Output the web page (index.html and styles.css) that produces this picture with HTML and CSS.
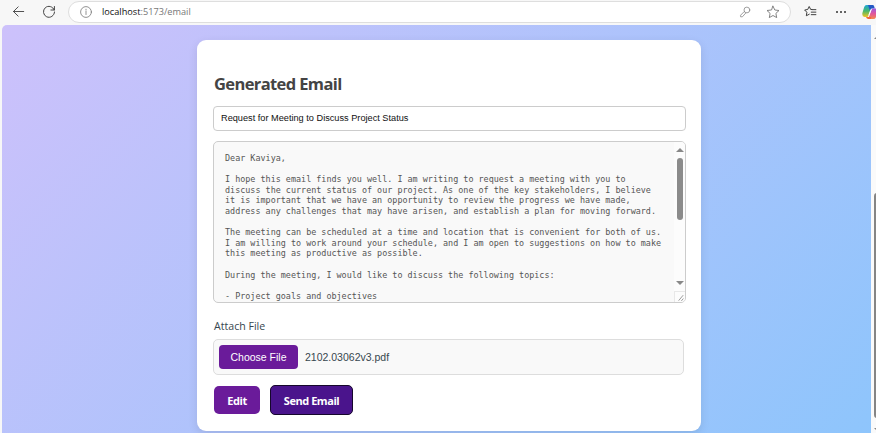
FILE: index.html
```html
<!DOCTYPE html>
<html lang="en">
<head>
<meta charset="utf-8">
<title>Generated Email</title>
<link rel="stylesheet" href="styles.css">
</head>
<body>
<header class="toolbar">
  <svg class="icon back" viewBox="0 0 14 14"><path d="M12.6 7H1.6M6.6 2L1.6 7l5 5"/></svg>
  <svg class="icon reload" viewBox="0 0 14 14"><path d="M12.2 5A5.5 5.5 0 1 0 12.5 7M12.4 1.5V5H8.9"/></svg>
  <div class="address">
    <svg class="icon info" viewBox="0 0 12 12"><circle cx="6" cy="6" r="5.4"/><path d="M6 5.3v3.2M6 3.2v.9"/></svg>
    <span class="url"><b>localhost</b>:5173/email</span>
    <svg class="icon key" viewBox="0 0 12 12"><circle cx="7.9" cy="4" r="2.900"/><path d="M5.300 5.500L1.600 9.200v1.600h1.800l3.500-3.900"/></svg>
    <svg class="icon star" viewBox="0 0 14 14"><path d="M7 1.200l1.800 3.800 4.200.5-3.100 2.900.8 4.200L7 10.500l-3.700 2.100.8-4.200L1 5.500 5.200 5z"/></svg>
  </div>
  <svg class="icon favorites" viewBox="0 0 14 14"><path d="M8.500 4.800H7.200L5.600 1.600 4 4.800l-3.300.6 2.400 2.400-.6 3.800 3.200-1.700M8.800 5h4M7.800 7.700h5M7.800 10.400h5"/></svg>
  <svg class="icon more" viewBox="0 0 12 4"><circle cx="2" cy="2" r="1"/><circle cx="6" cy="2" r="1"/><circle cx="10" cy="2" r="1"/></svg>
  <svg class="copilot" viewBox="0 0 16 16">
    <defs>
      <linearGradient id="cool" x1="0" y1="0" x2="0" y2="1"><stop offset="0" stop-color="#1fa6d8"/><stop offset=".5" stop-color="#49b86a"/><stop offset="1" stop-color="#f2c522"/></linearGradient>
      <linearGradient id="warm" x1="0" y1="0" x2="0" y2="1"><stop offset="0" stop-color="#9b5be0"/><stop offset=".5" stop-color="#e2579a"/><stop offset="1" stop-color="#f58a4c"/></linearGradient>
    </defs>
    <path fill="url(#cool)" d="M4.700 1h5.100L6.600 11.500Q6.200 13 4.500 13H2.600Q-.2 12.500.4 9L2.200 3Q2.800 1 4.700 1z"/>
    <path fill="#2459c5" d="M6 1h4.600q1.200 0 1.600 1.400l.6 2H9.400L8 7z"/>
    <path fill="url(#warm)" d="M11.300 4.400h2.300q2.800.5 2.100 4l-1.900 5Q13.200 15 11.300 15H6.200L9.400 5.800Q9.800 4.400 11.300 4.400z"/>
    <path fill="#fff" d="M8.700 5.200h1.100L7.300 11.600H6.200z"/>
    <path fill="#f0683a" d="M4 13h5.400L8.700 15H6.300Q4.600 15 4 13z"/>
  </svg>
</header>
<div class="viewport">
  <main class="page">
    <section class="card">
      <h2>Generated Email</h2>
      <div class="subject">Request for Meeting to Discuss Project Status</div>
      <div class="message">
        <pre>Dear Kaviya,

I hope this email finds you well. I am writing to request a meeting with you to
discuss the current status of our project. As one of the key stakeholders, I believe
it is important that we have an opportunity to review the progress we have made,
address any challenges that may have arisen, and establish a plan for moving forward.

The meeting can be scheduled at a time and location that is convenient for both of us.
I am willing to work around your schedule, and I am open to suggestions on how to make
this meeting as productive as possible.

During the meeting, I would like to discuss the following topics:

- Project goals and objectives</pre>
        <div class="scrollbar">
          <i class="up"></i><i class="thumb"></i><i class="down"></i>
          <svg class="grip" viewBox="0 0 10 11"><path d="M3.500 9.500l5-6M6.500 9.800l2.200-2.600"/></svg>
        </div>
      </div>
      <div class="label">Attach File</div>
      <div class="file"><span class="choose">Choose File</span><span class="filename">2102.03062v3.pdf</span></div>
      <div class="actions"><button class="edit">Edit</button><button class="send">Send Email</button></div>
    </section>
  </main>
  <aside class="page-scroll"><i class="up"></i><i class="page-thumb"></i><i class="down"></i></aside>
</div>
</body>
</html>
```
FILE: styles.css
```css
* { box-sizing: border-box; }
body {
  margin: 0;
  width: 876px;
  height: 433px;
  overflow: hidden;
  background: #f7f7f7;
  font-family: "Open Sans", "Noto Sans", sans-serif;
}
.toolbar { display: flex; align-items: center; height: 25px; padding: 0 0 2px 12px; overflow: hidden; }
.toolbar svg { flex: none; }
.icon { fill: none; stroke: #444; stroke-width: 1; stroke-linecap: round; stroke-linejoin: round; }
.back { width: 13px; height: 13px; }
.reload { width: 14px; height: 14px; margin-left: 17px; }
.address {
  display: flex;
  align-items: center;
  flex: none;
  width: 723px;
  height: 22px;
  margin-left: 12px;
  padding: 0 10px 0 11px;
  background: #fff;
  border: 1px solid #dedede;
  border-radius: 11px;
}
.info { width: 12px; height: 12px; stroke: #777; stroke-width: .8; }
.url { margin-left: 10px; font-size: 9.200px; color: #777; white-space: nowrap; }
.url b { font-weight: 400; color: #111; }
.key { width: 12px; height: 12px; margin-left: auto; stroke: #888; stroke-width: .8; }
.star { width: 14px; height: 14px; margin-left: 15px; stroke: #777; stroke-width: .9; }
.favorites { width: 13px; height: 13px; margin-left: 13px; stroke: #333; }
.more { width: 12px; height: 4px; margin-left: 18px; fill: #333; stroke: none; }
.copilot { width: 16px; height: 16px; margin-left: 15px; }
.viewport { display: flex; height: 408px; padding-left: 2px; background: #f7f7f7; }
.page {
  flex: none;
  width: 869px;
  padding: 15px 0 0 195px;
  border-radius: 5px 0 0 0;
  background: linear-gradient(135deg, #cdc1fb 0%, #8ec5fc 100%);
}
.card {
  width: 504px;
  height: 391px;
  padding: 33px 15px 0 16px;
  background: #fff;
  border-radius: 9px;
  box-shadow: 0 3px 10px rgba(0, 0, 0, .1);
}
h2 { margin: 0; height: 22px; line-height: 22px; font-size: 16.500px; letter-spacing: -.62px; color: #444; white-space: nowrap; padding-left: 1px; }
.subject {
  height: 25px;
  margin-top: 11px;
  padding-left: 7px;
  border: 1px solid #ccc;
  border-radius: 4px;
  font: 9.200px/23px "Liberation Sans", sans-serif;
  color: #111;
}
.message {
  display: flex;
  justify-content: space-between;
  height: 162px;
  margin-top: 10px;
  border: 1px solid #ccc;
  border-radius: 5px;
  background: #f9f9f9;
  overflow: hidden;
}
pre { margin: 0; padding: 11px 0 0 11px; font: 8.430px/10.600px "DejaVu Sans Mono", monospace; color: #555; }
.scrollbar { display: flex; flex-direction: column; align-items: center; width: 11px; padding-top: 6px; background: #fcfcfc; }
.up, .down { width: 0; height: 0; border: 4px solid transparent; }
.up { border-top: 0; border-bottom: 4px solid #888; }
.down { border-bottom: 0; border-top: 4px solid #888; margin-top: auto; }
.thumb { width: 6px; height: 62px; margin-top: 6px; border-radius: 3px; background: #8b8b8b; }
.grip { width: 11px; height: 11px; margin-top: 6px; border-top: 1px solid #e8e8e8; border-left: 1px solid #e8e8e8; fill: none; stroke: #777; stroke-width: .8; }
.label { height: 18px; margin-top: 14px; padding-left: 1px; line-height: 18px; font-size: 10.600px; color: #37474f; }
.file {
  display: flex;
  align-items: center;
  width: 471px;
  height: 36px;
  margin-top: 4px;
  padding-left: 5px;
  border: 1px solid #ddd;
  border-radius: 5px;
  background: #f9f9f9;
  font: 10.500px "Liberation Sans", sans-serif;
  color: #37474f;
}
.choose { width: 79px; height: 24px; line-height: 24px; border-radius: 4px; background: #6a1b9a; color: #fff; text-align: center; }
.filename { margin-left: 7px; }
.actions { display: flex; gap: 10px; margin-top: 10px; padding-left: 1px; }
button { height: 30px; padding: 0; border: 0; border-radius: 5px; color: #fff; font: 700 11px "Open Sans", sans-serif; letter-spacing: -.45px; }
.edit { width: 46px; height: 28px; margin-top: 1px; background: #6a1b9a; }
.send { width: 83px; background: #4a148c; border: 1.500px solid #16072c; }
.page-scroll { display: flex; flex-direction: column; width: 5px; padding: 10px 0 1px 3px; overflow: hidden; background: #fafafa; }
.page-thumb { flex: none; width: 6px; height: 225px; margin-top: 154px; background: #858585; border-radius: 3px; }
```
